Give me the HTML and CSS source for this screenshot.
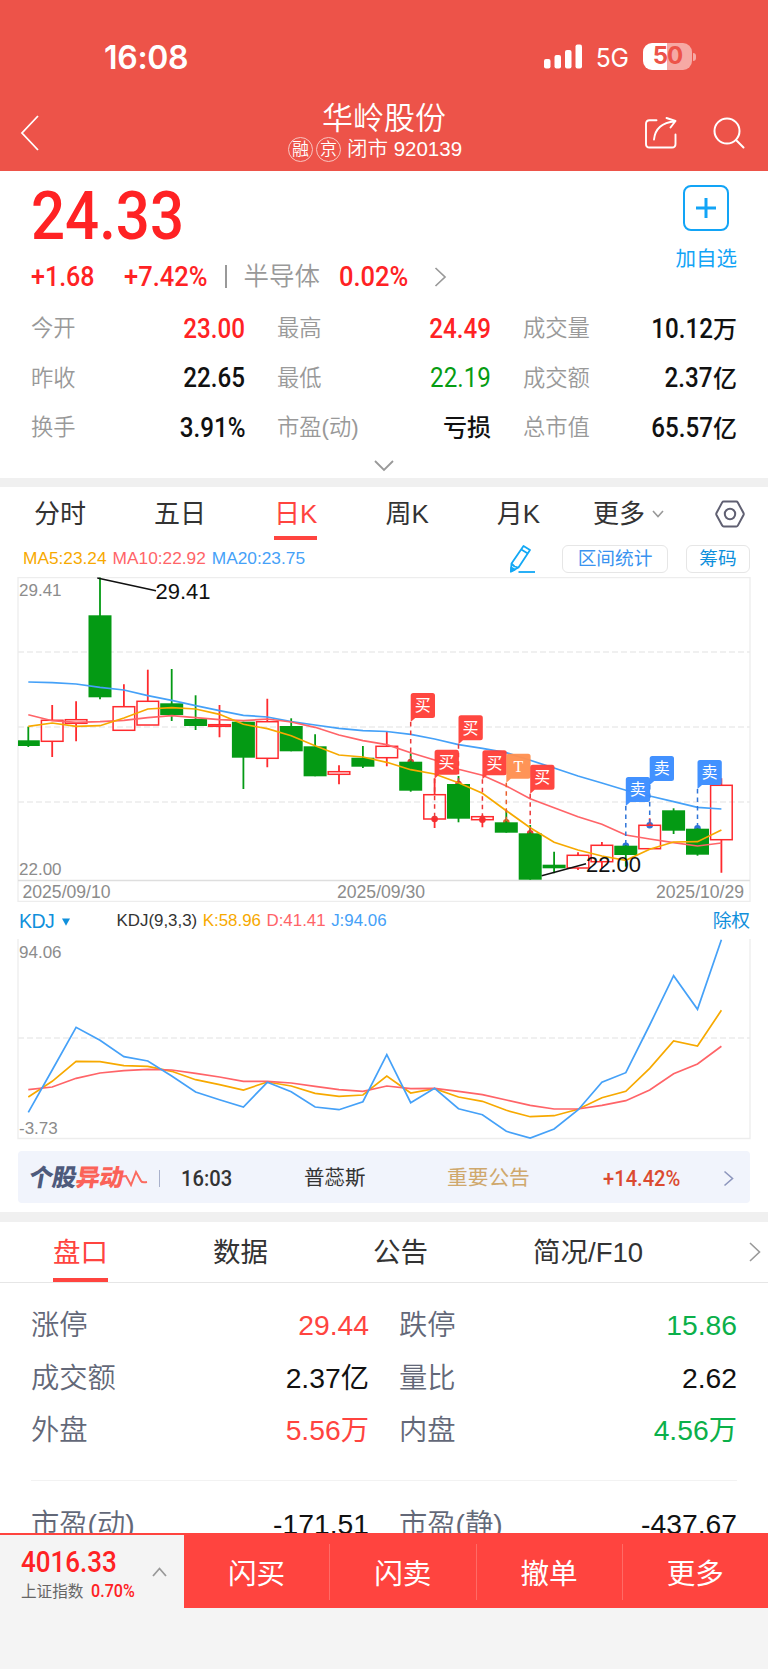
FILE: index.html
```html
<!DOCTYPE html>
<html lang="zh-CN">
<head>
  <meta charset="UTF-8">
  <title>华岭股份 920139</title>
  <meta name="viewport" content="width=device-width, initial-scale=1.0">
  <link rel="stylesheet" href="styles.css">
</head>
<body>
  <!-- Header -->
  <header>
    <div class="status-bar">
      <span class="clock">16:08</span>
      <div class="status-right">
        <svg class="signal" width="39" height="25" viewBox="0 0 39 25" fill="#fff">
          <rect x="0" y="15" width="6.5" height="9.5" rx="2"/>
          <rect x="10.5" y="11" width="6.5" height="13.5" rx="2"/>
          <rect x="21" y="6" width="6.5" height="18.5" rx="2"/>
          <rect x="31.5" y="0.5" width="6.5" height="24" rx="2"/>
        </svg>
        <span class="network">5G</span>
        <div class="battery"><span class="b5">5</span><span class="b0">0</span></div>
        <span class="battery-tip"></span>
      </div>
    </div>
    <div class="title-bar">
      <svg class="back" width="20" height="38" viewBox="0 0 20 38" fill="none" stroke="#fff" stroke-width="1.8">
        <path d="M18 2 L2 19 L18 36"/>
      </svg>
      <div class="title">
        <h1>华岭股份</h1>
        <div class="subtitle">
          <span class="tag">融</span><span class="tag">京</span>
          <span class="code">闭市 920139</span>
        </div>
      </div>
      <div class="title-icons">
        <svg width="34" height="34" viewBox="0 0 34 34" fill="none" stroke="#fff" stroke-width="1.9" stroke-linecap="round" stroke-linejoin="round">
          <path d="M12.5 4.2 H5.5 Q2 4.2 2 7.7 V28 Q2 31.5 5.5 31.5 H28 Q31.5 31.5 31.5 28 V18.5"/>
          <path d="M10 23.5 C11 13 18 6.5 31 5.2 M22.5 2 L31.5 5 L26.5 11.5"/>
        </svg>
        <svg width="34" height="34" viewBox="0 0 34 34" fill="none" stroke="#fff" stroke-width="2" stroke-linecap="round">
          <circle cx="15" cy="15" r="12.5"/>
          <path d="M24 24 L31.5 31.5"/>
        </svg>
      </div>
    </div>
  </header>

  <!-- Price summary -->
  <section class="quote">
    <div class="quote-top">
      <div>
        <div class="price"><span class="din">24.33</span></div>
        <div class="change">
          <span class="din c1">+1.68</span>
          <span class="din c2">+7.42%</span>
          <span class="bar"></span>
          <span class="sector">半导体</span>
          <span class="din c3">0.02%</span>
          <svg width="13" height="20" viewBox="0 0 13 20" fill="none" stroke="#999" stroke-width="1.7"><path d="M1.5 1 L11 10 L1.5 19"/></svg>
        </div>
      </div>
      <div class="add">
        <div class="add-box">
          <svg width="20" height="20" viewBox="0 0 20 20" stroke="#12a4f6" stroke-width="3"><path d="M10 0 V20 M0 10 H20"/></svg>
        </div>
        <span>加自选</span>
      </div>
    </div>
    <div class="stats">
      <div class="stat"><label>今开</label><b class="red"><i class="din">23.00</i></b></div>
      <div class="stat"><label>最高</label><b class="red"><i class="din">24.49</i></b></div>
      <div class="stat"><label>成交量</label><b><i class="din">10.12</i>万</b></div>
      <div class="stat"><label>昨收</label><b><i class="din">22.65</i></b></div>
      <div class="stat"><label>最低</label><b class="green"><i class="din">22.19</i></b></div>
      <div class="stat"><label>成交额</label><b><i class="din">2.37</i>亿</b></div>
      <div class="stat"><label>换手</label><b><i class="din">3.91%</i></b></div>
      <div class="stat"><label>市盈(动)</label><b>亏损</b></div>
      <div class="stat"><label>总市值</label><b><i class="din">65.57</i>亿</b></div>
    </div>
    <svg class="expand" width="20" height="12" viewBox="0 0 20 12" fill="none" stroke="#999" stroke-width="1.8"><path d="M1 1 L10 10 L19 1"/></svg>
  </section>

  <!-- Chart -->
  <section class="chart">
    <nav class="periods">
      <a>分时</a>
      <a>五日</a>
      <a class="active">日K</a>
      <a>周K</a>
      <a>月K</a>
      <a class="more">更多<svg width="12" height="8" viewBox="0 0 12 8" fill="none" stroke="#999" stroke-width="1.6"><path d="M1 1 L6 6.5 L11 1"/></svg></a>
      <svg class="gear" width="30" height="28" viewBox="0 0 30 28" fill="none" stroke="#606072" stroke-width="2">
        <path d="M8.7 1.5 H21.3 Q22.3 1.5 22.8 2.4 L28.5 13 Q29 14 28.5 15 L22.8 25.6 Q22.3 26.5 21.3 26.5 H8.7 Q7.7 26.5 7.2 25.6 L1.5 15 Q1 14 1.5 13 L7.2 2.4 Q7.7 1.5 8.7 1.5 Z"/>
        <circle cx="15" cy="14" r="5.2"/>
      </svg>
    </nav>
    <div class="ma-row">
      <span class="yellow">MA5:23.24</span>
      <span class="pink">MA10:22.92</span>
      <span class="blue">MA20:23.75</span>
      <svg class="pencil" width="27" height="30" viewBox="0 0 27 30" fill="none" stroke="#12a8f5" stroke-width="1.8" stroke-linejoin="round">
        <path d="M14.5 2 L21 6 L9.5 23.5 L2 27.5 L2.5 19.5 Z M12.3 5.5 L18.8 9.5 M2.5 19.5 L5.5 22.5 L9.5 23.5"/>
        <path d="M2 27.5 L2.2 23.5 L5.8 25.6 Z" fill="#12a8f5"/>
        <path d="M9.5 28 H26"/>
      </svg>
      <span class="btn">区间统计</span>
      <span class="btn btn-small">筹码</span>
    </div>
    <svg id="kline" class="kline" width="768" height="325" viewBox="0 0 768 325"></svg>
    <div class="kdj-row">
      <span class="kdj-name">KDJ</span>
      <svg width="8" height="8" viewBox="0 0 8 8" fill="#1090dc"><path d="M0 0.5 H8 L4 7.8 Z"/></svg>
      <span class="kdj-param">KDJ(9,3,3)</span>
      <span class="yellow">K:58.96</span>
      <span class="pink">D:41.41</span>
      <span class="blue">J:94.06</span>
      <span class="adjust">除权</span>
    </div>
    <svg id="kdj" class="kdj" width="768" height="201" viewBox="0 0 768 201"></svg>

    <!-- Stock movement banner -->
    <div class="banner">
      <div class="banner-logo"><span class="navy">个股</span><span class="coral">异动</span></div>
      <svg class="zigzag" width="26" height="18" viewBox="0 0 26 18" fill="none" stroke="#fb6b60" stroke-width="2"><path d="M0 7.5 L4 7 L9 16 L14 3 L19 12 Q20 14 25 13"/></svg>
      <span class="banner-bar"></span>
      <span class="din time">16:03</span>
      <span class="name">普蕊斯</span>
      <span class="type">重要公告</span>
      <span class="din pct">+14.42%</span>
      <svg class="arrow" width="11" height="17" viewBox="0 0 11 17" fill="none" stroke="#8d96bd" stroke-width="1.6"><path d="M1.5 1.5 L9.5 8.5 L1.5 15.5"/></svg>
    </div>
  </section>

  <!-- Details -->
  <section class="details">
    <nav class="tabs">
      <a class="active">盘口</a>
      <a>数据</a>
      <a>公告</a>
      <a>简况/F10</a>
      <svg width="12" height="20" viewBox="0 0 12 20" fill="none" stroke="#999" stroke-width="1.6"><path d="M1 1 L10.5 10 L1 19"/></svg>
    </nav>
    <div class="rows">
      <div class="row"><label>涨停</label><b class="red">29.44</b></div>
      <div class="row"><label>跌停</label><b class="green">15.86</b></div>
      <div class="row"><label>成交额</label><b>2.37亿</b></div>
      <div class="row"><label>量比</label><b>2.62</b></div>
      <div class="row"><label>外盘</label><b class="red">5.56万</b></div>
      <div class="row"><label>内盘</label><b class="green">4.56万</b></div>
    </div>
    <div class="rows rows-next">
      <div class="row"><label>市盈(动)</label><b>-171.51</b></div>
      <div class="row"><label>市盈(静)</label><b>-437.67</b></div>
    </div>
  </section>

  <!-- Bottom Bar -->
  <footer>
    <div class="index">
      <div>
        <div class="index-value"><span class="din">4016.33</span></div>
        <div class="index-name">上证指数 <span class="din">0.70%</span></div>
      </div>
      <svg width="15" height="10" viewBox="0 0 15 10" fill="none" stroke="#999" stroke-width="1.8"><path d="M1 9 L7.5 1.5 L14 9"/></svg>
    </div>
    <div class="actions">
      <a>闪买</a>
      <a>闪卖</a>
      <a>撤单</a>
      <a>更多</a>
    </div>
  </footer>

  <script src="chart.js"></script>
</body>
</html>
```
FILE: styles.css
```css
/* ====== GLOBAL RESET ====== */
* {
  margin: 0;
  padding: 0;
  box-sizing: border-box;
}

body {
  width: 768px;
  height: 1669px;
  overflow: hidden;
  display: flex;
  flex-direction: column;
  font-family: "Liberation Sans", "Noto Sans CJK SC", sans-serif;
  line-height: 1.2;
  background-color: #fff;
  color: #111;
}
svg {
  display: block;
  flex: none;
}
span, a, label, b {
  white-space: nowrap;
}
i {
  font-style: normal;
}
b {
  font-weight: 400;
}

/* narrow digits */
.din {
  display: inline-block;
  font-family: Roboto, "Noto Sans CJK SC", sans-serif;
  font-weight: 500;
  transform: scaleX(0.895);
  transform-origin: left center;
}
.red { color: #ff2224; }
.green { color: #069c12; }
.yellow { color: #f7a900; }
.pink { color: #ff6468; }
.blue { color: #45a1f8; }

/* ====== HEADER ====== */
header {
  height: 171px;
  flex: none;
  background-color: #ed5349;
  color: #fff;
}
.status-bar {
  height: 97px;
  padding: 35px 72px 0 104px;
  display: flex;
  justify-content: space-between;
  font-family: Inter, sans-serif;
}
.clock {
  font-size: 32px;
  font-weight: 600;
  line-height: 46px;
  letter-spacing: -0.3px;
}
.status-right {
  display: flex;
  align-items: center;
  height: 43px;
}
.network {
  font-size: 26px;
  margin: 2px 14px 0 12px;
  letter-spacing: -0.5px;
  transform: scaleX(0.95);
}
.battery {
  width: 49px;
  height: 27px;
  border-radius: 9px;
  background: linear-gradient(to right, #fff 50%, #f6a9a4 50%);
  display: flex;
  justify-content: center;
  align-items: center;
  font-size: 24px;
  font-weight: 700;
  color: #ed5349;
  letter-spacing: -1px;
}
.battery-tip {
  width: 3px;
  height: 8px;
  margin-left: 1px;
  border-radius: 0 3px 3px 0;
  background-color: #f6a9a4;
}
.title-bar {
  height: 74px;
  padding: 0 22px 0 20px;
  display: flex;
  justify-content: space-between;
  align-items: flex-start;
  position: relative;
}
.back {
  margin-top: 17px;
}
.title {
  position: absolute;
  left: 0;
  right: 0;
  text-align: center;
}
.title h1 {
  font-size: 31px;
  font-weight: 350;
  line-height: 43px;
}
.subtitle {
  display: flex;
  justify-content: center;
  align-items: center;
  height: 19px;
  margin-left: -18px;
}
.tag {
  width: 25px;
  height: 25px;
  margin-right: 3px;
  border: 1.3px solid #f9c5c1;
  border-radius: 50%;
  font-size: 17px;
  line-height: 24px;
  font-weight: 350;
}
.code {
  margin-left: 3px;
  font-size: 20.5px;
  font-weight: 350;
}
.title-icons {
  display: flex;
  gap: 34px;
  margin-top: 19px;
}

/* ====== QUOTE ====== */
.quote {
  height: 307px;
  flex: none;
  padding: 0 31px;
}
.quote-top {
  display: flex;
  justify-content: space-between;
  height: 133px;
}
.price {
  color: #ff2224;
  font-size: 67px;
  line-height: 89px;
  height: 87px;
}
.change {
  display: flex;
  align-items: center;
  height: 37px;
  font-size: 28px;
  color: #ff2224;
}
.c1 { width: 93px; }
.c2 { width: 101px; }
.c3 { width: 95px; }
.change .c2, .change .c3 {
  transform: scaleX(0.91);
}
.bar {
  width: 1.5px;
  height: 23px;
  background-color: #999;
  margin-right: 17px;
}
.sector {
  width: 95px;
  font-size: 25.5px;
  font-weight: 350;
  color: #999;
}
.add {
  display: flex;
  flex-direction: column;
  align-items: center;
  padding-top: 14px;
  font-size: 20.5px;
  color: #12a4f6;
}
.add-box {
  width: 46px;
  height: 46px;
  border: 2px solid #12a4f6;
  border-radius: 8px;
  display: flex;
  align-items: center;
  justify-content: center;
  margin-bottom: 13px;
}
.add span {
  line-height: 30px;
}
.stats {
  display: grid;
  grid-template-columns: 214px 214px 214px;
  column-gap: 32px;
  grid-auto-rows: 49.7px;
}
.stat {
  display: flex;
  justify-content: space-between;
  align-items: center;
}
.stat label {
  font-size: 22.3px;
  font-weight: 350;
  color: #999;
  padding-top: 1px;
}
.stat b {
  font-size: 24px;
  font-weight: 500;
}
.stat .din {
  font-size: 27px;
  transform-origin: right center;
}
.stat .green .din {
  font-weight: 400;
}
.expand {
  margin: 7px auto 0;
}

/* ====== CHART ====== */
.chart {
  height: 734px;
  flex: none;
  border-top: 9px solid #f0f0f0;
}
.periods {
  display: flex;
  align-items: center;
  gap: 68px;
  height: 53px;
  padding-left: 34px;
  font-size: 26px;
  color: #333;
}
.periods a {
  height: 53px;
  line-height: 54px;
}
.periods .active {
  color: #ff443f;
  border-bottom: 4px solid #ff443f;
}
.periods .more {
  display: flex;
  align-items: center;
  gap: 7px;
  margin-left: -15px;
}
.gear {
  margin-left: -17px;
}
.ma-row {
  display: flex;
  align-items: center;
  height: 37px;
  padding: 0 18px 0 23px;
  font-size: 17.3px;
}
.ma-row span {
  margin-right: 6px;
}
.pencil {
  margin-left: auto;
  margin-right: 26px;
}
.ma-row .btn {
  width: 106px;
  height: 28px;
  border: 1.5px solid #e6e6e6;
  border-radius: 6px;
  margin-right: 18px;
  font-size: 18.7px;
  line-height: 26px;
  text-align: center;
  color: #3a93f0;
}
.ma-row .btn-small {
  width: 64px;
  margin-right: 0;
  color: #1090dc;
}
.kdj-row {
  display: flex;
  align-items: center;
  height: 37px;
  padding: 2px 18px 0 19px;
  font-size: 16.9px;
  color: #333;
}
.kdj-row span {
  margin-right: 5.5px;
}
.kdj-row .kdj-name {
  width: 37px;
  font-size: 19.5px;
  letter-spacing: -0.6px;
  color: #1090dc;
}
.kdj-row .kdj-param {
  margin-left: 47px;
}
.kdj-row .adjust {
  margin: 0 0 0 auto;
  font-size: 18.7px;
  color: #1090dc;
}
.frame {
  fill: none;
  stroke: #ededed;
  stroke-width: 1.3;
}
.dash {
  stroke: #ececec;
  stroke-width: 1.3;
  stroke-dasharray: 6 3;
}
.axis {
  font-size: 17px;
  fill: #8c8c8c;
}
.date {
  font-size: 17.6px;
}
.mark {
  font-size: 22px;
  fill: #111;
}
.flag {
  font-size: 16px;
  fill: #fff;
  text-anchor: middle;
}
.flag-t {
  font-family: "Liberation Serif", serif;
}

/* ====== BANNER ====== */
.banner {
  height: 52px;
  margin: 11px 18px 0;
  padding: 2px 0 0 11px;
  display: flex;
  align-items: center;
  background-color: #f1f4fc;
  border-radius: 4px;
}
.banner-logo {
  width: 93px;
  font-size: 24px;
  font-weight: 900;
  letter-spacing: -0.5px;
  white-space: nowrap;
  transform: skewX(-10deg);
}
.navy { color: #4e5a7c; }
.coral { color: #fb6258; }
.banner-bar {
  width: 1px;
  height: 17px;
  margin: 0 21px 0 11px;
  background-color: #a9b1cc;
}
.banner .din {
  font-size: 22.5px;
}
.time {
  width: 123px;
  color: #333;
}
.name {
  width: 143px;
  font-size: 20.5px;
  color: #333;
}
.type {
  width: 156px;
  font-size: 20.7px;
  color: #cfa86c;
}
.pct {
  width: 120px;
  color: #db4a30;
}

/* ====== DETAILS ====== */
.details {
  height: 321px;
  flex: none;
  border-top: 10px solid #f0f0f0;
}
.tabs {
  display: flex;
  align-items: center;
  height: 61px;
  padding-left: 53px;
  border-bottom: 1.5px solid #e6e6e6;
  font-size: 27.5px;
  color: #333;
}
.tabs a {
  height: 60px;
  line-height: 61px;
  margin-right: 105px;
}
.tabs .active {
  color: #ff443f;
  border-bottom: 4px solid #ff443f;
}
.tabs a:nth-child(4) {
  margin-right: 106px;
}
.rows {
  display: grid;
  grid-template-columns: 338px 338px;
  column-gap: 30px;
  grid-auto-rows: 52.5px;
  margin: 0 31px;
  padding: 17px 0 22px;
}
.rows-next {
  border-top: 1.5px solid #f2f2f2;
  padding: 18px 0 0;
}
.row {
  display: flex;
  justify-content: space-between;
  align-items: center;
  font-size: 28.3px;
}
.row label {
  color: #636878;
  font-weight: 350;
}
.row .red { color: #ff443f; }
.row .green { color: #0bb04a; }

/* ====== BOTTOM BAR ====== */
footer {
  position: relative;
  z-index: 10;
  height: 136px;
  flex: none;
  display: flex;
  align-items: flex-start;
  background-color: #f4f4f4;
  border-top: 2px solid #ff443f;
}
.index {
  width: 184px;
  height: 74px;
  padding: 0 17px 0 21px;
  display: flex;
  align-items: center;
  justify-content: space-between;
}
.index-value {
  height: 38px;
  font-size: 29px;
  line-height: 40px;
  color: #ff2224;
}
.index-value .din {
  width: 100px;
}
.index-name {
  width: 120px;
  font-size: 15.6px;
  line-height: 22px;
  color: #666;
}
.index-name .din {
  font-size: 18px;
  margin-left: 3px;
  color: #ff2224;
}
.actions {
  flex: 1;
  height: 73px;
  display: flex;
  align-items: center;
  background-color: #ff443f;
}
.actions a {
  flex: 1;
  height: 56px;
  line-height: 60px;
  text-align: center;
  font-size: 28.6px;
  color: #fff;
}
.actions a + a {
  border-left: 1px solid #ff6b66;
}
```
FILE: chart.js
```js
// x centre of the candle with index i
function cx(i) {
  return +(28.3 + i * 23.9).toFixed(1);
}

// colour, high, body top, body bottom, low
const candles = [
  ['g', 149.7, 163.3, 169, 170], ['r', 128, 143.3, 164.3, 180], ['r', 124.3, 142.7, 146.3, 164.3],
  ['g', 0.5, 38.3, 120.3, 122.3], ['r', 107.3, 129.7, 153.3, 153.3], ['r', 92.7, 124.3, 148, 148],
  ['g', 92, 126.3, 138, 144], ['g', 118.3, 142, 149, 153], ['r', 128, 147.7, 149.3, 160.3],
  ['g', 144.7, 144.7, 180.7, 212], ['r', 121.7, 144.7, 181.3, 190.3], ['g', 141.3, 149, 174.3, 174.3],
  ['g', 157.3, 169.3, 199.3, 199.3], ['r', 188.3, 194.7, 197.3, 207.3], ['g', 169, 180.7, 189.7, 191],
  ['r', 154.3, 169.3, 180.7, 189.3], ['g', 176.3, 184.7, 213.7, 214.7], ['r', 201.3, 217.7, 242, 251],
  ['g', 199, 207, 241.7, 245.3], ['r', 238, 239.7, 242.7, 250.3], ['g', 233, 245.3, 255.7, 255.7],
  ['g', 248, 256.3, 302.7, 302.7], ['g', 274.7, 287.7, 291.3, 296.3], ['r', 275.3, 278.3, 291, 293],
  ['r', 265, 268.3, 284.7, 291.3], ['g', 268.3, 268.7, 278, 289.7], ['r', 241.3, 248.3, 271.7, 271.7],
  ['g', 231.3, 233.3, 253.7, 257], ['g', 251.3, 251.7, 277.7, 278.7], ['r', 201.3, 208.3, 262.7, 295.7]
];
const ma20 = [105, 105.7, 107, 110.3, 113, 118.7, 123.3, 128.7, 133.7, 138.3, 140, 144.7, 148, 151.3, 153.7, 154.5, 157.3, 162, 167.7, 171.3, 175.7, 183.3, 191, 199, 206, 213.3, 219, 224.7, 230.3, 232];
const ma10 = [137.7, 143.7, 145.3, 144.7, 143.3, 140.7, 138.7, 140.7, 142.7, 143.7, 142, 145, 150.3, 158, 163.7, 167.7, 175.7, 183, 192.3, 198.3, 209, 221.7, 230.7, 239.7, 247.3, 258, 262, 265.7, 269, 266];
const ma5 = [149.3, 146, 149.3, 148.7, 141, 132, 130.7, 132, 137.3, 147.3, 151.7, 158.7, 168.7, 178, 180, 185.3, 192.7, 197, 205.7, 216.3, 233.7, 250.7, 265.3, 273, 279, 283.3, 272.3, 265, 264.7, 253];

// candle index, flag top, dot y, text, colour
const flags = [
  [16, 116, 185, '买', '#ff4038'], [18, 138.3, 207, '买', '#ff4038'], [17, 172.7, 242, '买', '#ff4038'],
  [19, 173.3, 242.7, '买', '#ff4038'], [20, 176.7, 245.3, 'T', '#ff9050'], [21, 187.7, 256.3, '买', '#ff4038'],
  [25, 200, 268.7, '卖', '#3a8cff'], [26, 179, 248.3, '卖', '#3a8cff'], [28, 183, 251.3, '卖', '#3a8cff']
];
const dotColor = { '#ff4038': '#ec3838', '#ff9050': '#e8602c', '#3a8cff': '#2f74d8' };

const lineJ = [173.3, 131, 88.3, 101.3, 117.7, 122, 137, 153, 160.7, 168, 143.3, 152.7, 168, 170.7, 162.7, 115.7, 163.7, 149.3, 169.7, 175.7, 192.3, 199, 190, 171, 143.3, 133.7, 86, 36.7, 70.3, 0.7];
const lineK = [158, 142.3, 122.3, 122.7, 126.7, 127.3, 132.3, 140.7, 145.7, 151, 143, 147, 154.3, 157.3, 156, 137, 154, 149.7, 158, 162.3, 171.3, 177.7, 176.7, 170.3, 158.7, 152.3, 129.3, 102, 107, 71.3];
const lineD = [150.7, 148, 139.3, 134, 131.7, 130.3, 131, 134.3, 138, 142.3, 142.3, 144, 147.3, 150.7, 152.3, 147, 149.7, 149.3, 152.3, 155.7, 161, 166.3, 170, 170, 166.3, 161.7, 151, 134.7, 125, 107.3];

function line(points, color) {
  const pts = points.map((y, i) => cx(i) + ',' + y).join(' ');
  return `<polyline points="${pts}" fill="none" stroke="${color}" stroke-width="1.7"/>`;
}

// ----- K line -----
let k = '<path class="frame" d="M18 0.7 H750 V324.3 H18 Z"/>';
k += '<path class="frame" style="stroke:#dedede" d="M18 303.5 H750"/>';
[75, 150, 225].forEach(y => {
  k += `<path class="dash" d="M18 ${y} H750"/>`;
});
flags.forEach(([i, top, dot, , color]) => {
  k += `<circle cx="${cx(i)}" cy="${dot}" r="3.3" fill="${dotColor[color]}"/>`;
});
candles.forEach(([type, high, top, bottom, low], i) => {
  const x = cx(i);
  if (type === 'g') {
    const left = i === 0 ? 18 : x - 11.5;
    k += `<path d="M${x} ${high} V${low}" stroke="#049a14" stroke-width="1.8"/>`;
    k += `<rect x="${left}" y="${top}" width="${x + 11.5 - left}" height="${bottom - top}" fill="#049a14"/>`;
  } else {
    k += `<path d="M${x} ${high} V${top} M${x} ${bottom} V${low}" stroke="#ff2a2e" stroke-width="1.8"/>`;
    k += `<rect x="${x - 10.8}" y="${top}" width="21.6" height="${bottom - top}" fill="none" stroke="#ff2a2e" stroke-width="1.5"/>`;
  }
});
k += line(ma20, '#45a1f8') + line(ma10, '#ff6468') + line(ma5, '#f7a900');
flags.forEach(([i, top, dot, , color]) => {
  k += `<path d="M${cx(i)} ${top + 29} V${dot}" stroke="${dotColor[color]}" stroke-width="1.5" stroke-dasharray="4.5 4"/>`;
});
flags.forEach(([i, top, , text, color]) => {
  const x = cx(i);
  k += `<path d="M${x} ${top + 2.5} q0 -2.5 2.5 -2.5 h19.3 q2.5 0 2.5 2.5 v20 q0 2.5 -2.5 2.5 H${x + 4.5} L${x} ${top + 29} Z" fill="${color}" fill-opacity="0.96"/>`;
  k += `<text class="flag${text === 'T' ? ' flag-t' : ''}" x="${x + 12}" y="${top + 18.3}">${text}</text>`;
});
k += '<path d="M97.3 1 L156 13.7 M541.7 298.7 L586 286.7" stroke="#111" stroke-width="1.5"/>';
k += '<text class="mark" x="155.5" y="21.8">29.41</text><text class="mark" x="586" y="295.3">22.00</text>';
k += '<text class="axis" x="19" y="19">29.41</text><text class="axis" x="19" y="298">22.00</text>';
k += '<text class="axis date" x="22.5" y="321">2025/09/10</text>';
k += '<text class="axis date" x="337" y="321">2025/09/30</text>';
k += '<text class="axis date" x="656" y="321">2025/10/29</text>';
document.getElementById('kline').innerHTML = k;

// ----- KDJ -----
let d = '<path class="frame" d="M18 0 V199.5 H750 V0"/><path class="dash" d="M18 99 H750"/>';
d += line(lineK, '#f7a900') + line(lineD, '#ff6468') + line(lineJ, '#45a1f8');
d += '<text class="axis" x="19" y="18.5">94.06</text><text class="axis" x="19" y="194.5">-3.73</text>';
document.getElementById('kdj').innerHTML = d;
```
